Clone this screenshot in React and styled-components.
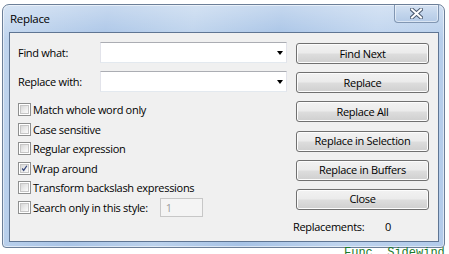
import styled, { createGlobalStyle } from "styled-components"

const GlobalStyle = createGlobalStyle`
html, body {
  margin: 0;
  padding: 0;
  background: #ffffff;
  overflow: hidden;
}
body {
  font-family: "Open Sans", "Noto Sans", sans-serif;
  font-size: 11px;
  letter-spacing: -0.3px;
  color: #000;
}
`

const Screen = styled.div`
width: 449px;
height: 254px;
box-sizing: border-box;
padding: 4px 0 0 2px;
overflow: hidden;
`

const Window = styled.div`
width: 443px;
height: 244px;
box-sizing: border-box;
border: 1px solid #6c7f98;
border-radius: 7px 7px 4px 4px;
padding: 0 5px 5px 6px;
display: flex;
flex-direction: column;
background:
  linear-gradient(180deg, rgba(255,255,255,0.35) 0%, rgba(255,255,255,0) 14%),
  linear-gradient(100deg, #c2d6ee 0%, #aac5e7 22%, #bcd2ec 40%, #a7c3e6 58%, #bfd4ee 78%, #b2cbea 100%);
box-shadow: inset 0 0 0 1px rgba(255,255,255,0.55);
`

const TitleBar = styled.div`
height: 27px;
display: flex;
justify-content: space-between;
align-items: flex-start;
`

const Title = styled.div`
padding: 6px 0 0 1px;
line-height: 16px;
font-size: 11.5px;
color: #000;
`

const CloseButton = styled.div`
width: 45px;
height: 18px;
box-sizing: border-box;
border: 1px solid #8196b2;
border-top: none;
border-radius: 0 0 4px 4px;
display: flex;
align-items: center;
justify-content: center;
background: linear-gradient(180deg, #d5e2f2 0%, #c2d5ec 50%, #b4cae6 100%);
box-shadow: inset 0 0 0 1px rgba(255,255,255,0.5);
`

const Client = styled.div`
flex: 1;
display: flex;
gap: 9px;
background: #f0f0f0;
border: 1px solid #5f7593;
padding: 9px 0 0 8px;
`

const LeftPane = styled.div`
width: 269px;
display: flex;
flex-direction: column;
`

const FieldRow = styled.div`
display: grid;
grid-template-columns: 82px 187px;
align-items: center;
height: 21px;
& + & {
  margin-top: 8px;
}
`

const Combo = styled.div`
height: 21px;
box-sizing: border-box;
background: #fff;
border: 1px solid #e2e3ea;
border-top-color: #abadb3;
border-bottom-color: #e3e9ef;
display: flex;
align-items: center;
justify-content: flex-end;
padding-right: 3px;
`

const Arrow = styled.span`
width: 0;
height: 0;
border-left: 3.5px solid transparent;
border-right: 3.5px solid transparent;
border-top: 4px solid #000;
`

const Options = styled.div`
margin-top: 8px;
display: flex;
flex-direction: column;
`

const OptionRow = styled.div`
height: 19.5px;
display: flex;
align-items: center;
gap: 2px;
`

const Check = styled.span`
width: 13px;
height: 13px;
box-sizing: border-box;
border: 1px solid #8e8f8f;
background: #fff;
display: flex;
align-items: center;
justify-content: center;
flex-shrink: 0;
span {
  width: 9px;
  height: 9px;
  box-sizing: border-box;
  border: 1px solid #c6c6c6;
  background: linear-gradient(135deg, #d8d8d8 0%, #ececec 55%, #fbfbfb 100%);
  display: flex;
  align-items: center;
  justify-content: center;
}
`

const StyleInput = styled.div`
width: 43px;
height: 19px;
box-sizing: border-box;
margin-left: 10px;
border: 1px solid #c7c7c7;
background: #f4f4f4;
color: #9c9c9c;
padding-left: 5px;
display: flex;
align-items: center;
`

const ButtonColumn = styled.div`
width: 133px;
margin-top: 1px;
display: flex;
flex-direction: column;
gap: 8.2px;
`

const Button = styled.button`
all: unset;
height: 21px;
box-sizing: border-box;
border: 1px solid #707070;
border-radius: 3px;
text-align: center;
font-family: "Open Sans", "Noto Sans", sans-serif;
font-size: 11px;
letter-spacing: -0.3px;
line-height: 18px;
color: #000;
background: linear-gradient(180deg, #f2f2f2 0%, #ebebeb 48%, #dddddd 52%, #cfcfcf 100%);
box-shadow: inset 0 0 0 1px #fcfcfc;
`

const Counter = styled.div`
margin-left: -3px;
height: 16px;
display: flex;
align-items: center;
span:first-child {
  width: 92px;
}
`

const EditorLine = styled.div`
margin: -1px 0 0 342px;
font-family: "Liberation Mono", monospace;
font-size: 12px;
line-height: 12px;
letter-spacing: 0;
color: #1c7a2c;
white-space: pre;
`

const options = [
  { label: "Match whole word only" },
  { label: "Case sensitive" },
  { label: "Regular expression" },
  { label: "Wrap around", checked: true },
  { label: "Transform backslash expressions" },
  { label: "Search only in this style:", input: "1" },
]

const buttons = ["Find Next", "Replace", "Replace All", "Replace in Selection", "Replace in Buffers", "Close"]

const CheckBox = ({ checked }) => (
  <Check>
    <span>
      {checked && (
        <svg width="9" height="9" viewBox="0 0 9 9">
          <path d="M1.5 4.5 L3.5 7 L7.5 1" fill="none" stroke="#34467a" strokeWidth="1.6" />
        </svg>
      )}
    </span>
  </Check>
)

const App = () => {
  return (
    <Screen>
      <GlobalStyle />
      <Window>
        <TitleBar>
          <Title>Replace</Title>
          <CloseButton>
            <svg width="13" height="11" viewBox="0 0 13 11">
              <path d="M2 1.5 L11 9.5 M11 1.5 L2 9.5" stroke="#4c5b70" strokeWidth="4" strokeLinecap="square" />
              <path d="M2 1.5 L11 9.5 M11 1.5 L2 9.5" stroke="#ffffff" strokeWidth="2" strokeLinecap="square" />
            </svg>
          </CloseButton>
        </TitleBar>
        <Client>
          <LeftPane>
            <FieldRow>
              <span>Find what:</span>
              <Combo><Arrow /></Combo>
            </FieldRow>
            <FieldRow>
              <span>Replace with:</span>
              <Combo><Arrow /></Combo>
            </FieldRow>
            <Options>
              {options.map((o) => (
                <OptionRow key={o.label}>
                  <CheckBox checked={o.checked} />
                  <span>{o.label}</span>
                  {o.input && <StyleInput>{o.input}</StyleInput>}
                </OptionRow>
              ))}
            </Options>
          </LeftPane>
          <ButtonColumn>
            {buttons.map((b) => (
              <Button key={b}>{b}</Button>
            ))}
            <Counter>
              <span>Replacements:</span>
              <span>0</span>
            </Counter>
          </ButtonColumn>
        </Client>
      </Window>
      <EditorLine>Func  Sidewind</EditorLine>
    </Screen>
  )
}

export default App
